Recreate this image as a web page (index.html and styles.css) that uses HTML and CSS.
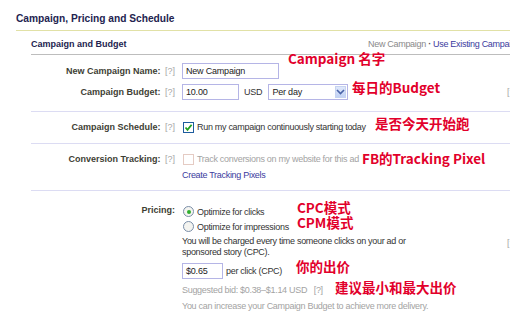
FILE: index.html
```html
<!DOCTYPE html>
<html>
<head>
<meta charset="utf-8">
<link rel="stylesheet" href="styles.css">
</head>
<body>
<div class="page">
  <h1 class="title">Campaign, Pricing and Schedule</h1>
  <div class="section">
    <div class="section-head">
      <span class="section-title">Campaign and Budget</span>
      <span class="links"><span class="muted">New Campaign</span> <span class="dot">·</span> <span class="link">Use Existing Campaign</span></span>
    </div>

    <div class="group g-budget">
      <div class="row">
        <div class="label">New Campaign Name: <span class="help">[?]</span></div>
        <div class="field"><span class="input w-name">New Campaign</span></div>
      </div>
      <div class="row">
        <div class="label">Campaign Budget: <span class="help">[?]</span></div>
        <div class="field">
          <span class="input w-budget">10.00</span>
          <span class="unit">USD</span>
          <span class="select">Per day<span class="select-btn"><svg width="9" height="6" viewBox="0 0 9 6"><path d="M1 1 L4.5 4.5 L8 1" fill="none" stroke="#4a64a8" stroke-width="1.6"/></svg></span></span>
        </div>
        <div class="side-help">[?]</div>
      </div>
    </div>

    <div class="group g-schedule">
      <div class="row">
        <div class="label">Campaign Schedule: <span class="help">[?]</span></div>
        <div class="field">
          <span class="checkbox checked"><svg width="9" height="9" viewBox="0 0 9 9"><path d="M1.5 4.5 L3.5 6.8 L7.6 1.8" fill="none" stroke="#21a121" stroke-width="1.8"/></svg></span>
          <span class="text">Run my campaign continuously starting today</span>
        </div>
      </div>
    </div>

    <div class="group g-tracking">
      <div class="row">
        <div class="label">Conversion Tracking: <span class="help">[?]</span></div>
        <div class="field">
          <span class="checkbox disabled"></span>
          <span class="text gray">Track conversions on my website for this ad</span>
        </div>
      </div>
      <div class="row">
        <div class="label"></div>
        <div class="field"><span class="link">Create Tracking Pixels</span></div>
      </div>
    </div>

    <div class="group g-pricing">
      <div class="row top">
        <div class="label plain">Pricing:</div>
        <div class="stack">
          <div class="option"><span class="radio on"></span><span class="text">Optimize for clicks</span></div>
          <div class="option"><span class="radio"></span><span class="text">Optimize for impressions</span></div>
          <p class="desc">You will be charged every time someone clicks on your ad or<br>sponsored story (CPC).</p>
          <div class="bid"><span class="input w-bid">$0.65</span><span class="text">per click (CPC)</span></div>
          <p class="note-line">Suggested bid: $0.38–$1.14 USD&nbsp;&nbsp;&nbsp;[?]</p>
          <p class="note-line last">You can increase your Campaign Budget to achieve more delivery.</p>
        </div>
        <div class="side-help pricing-help">[?]</div>
      </div>
    </div>
  </div>

  <div class="notes">
    <span class="note n1">Campaign 名字</span>
    <span class="note n2">每日的Budget</span>
    <span class="note n3">是否今天开始跑</span>
    <span class="note n4">FB的Tracking Pixel</span>
    <span class="note n5">CPC模式</span>
    <span class="note n6">CPM模式</span>
    <span class="note n7">你的出价</span>
    <span class="note n8">建议最小和最大出价</span>
  </div>
</div>
</body>
</html>
```

FILE: styles.css
```css
html, body {
  margin: 0;
  padding: 0;
  background: #ffffff;
}
body {
  width: 510px;
  height: 315px;
  overflow: hidden;
  font-family: "Liberation Sans", Arial, sans-serif;
  font-size: 9px;
  color: #333333;
}
.page {
  position: relative;
  padding-left: 16px;
  width: 700px;
}
.title {
  margin: 0;
  padding: 12px 0 4px;
  font-size: 10.2px;
  line-height: 14px;
  font-weight: bold;
  color: #23234f;
  border-bottom: 1px solid #e1e1a6;
}
.section {
  margin-left: 15px;
}
.section-head {
  display: grid;
  grid-template-columns: 337px auto;
  padding: 6px 0 3px;
  line-height: 14px;
  border-bottom: 1px solid #bdbdbd;
  white-space: nowrap;
}
.section-title {
  font-weight: bold;
  color: #23234f;
}
.links {
  letter-spacing: -0.3px;
}
.muted {
  color: #8a8a8a;
}
.dot {
  color: #555;
  font-weight: bold;
}
.link {
  color: #3b3b9e;
  letter-spacing: -0.3px;
}
.group {
  border-bottom: 1px solid #dcdcf3;
}
.g-budget {
  padding: 8px 0 11px;
  display: flex;
  flex-direction: column;
  gap: 5px;
}
.g-schedule {
  padding: 8px 0 9px;
}
.g-tracking {
  padding: 8px 0 8px;
  display: flex;
  flex-direction: column;
  gap: 2px;
}
.g-pricing {
  padding: 13px 0 0;
  border-bottom: none;
}
.row {
  display: grid;
  grid-template-columns: 144px 318px auto;
  column-gap: 7px;
  align-items: center;
  line-height: 14px;
  white-space: nowrap;
}
.row.top {
  align-items: start;
}
.label {
  text-align: right;
  font-weight: bold;
  color: #3e3e34;
}
.label.plain {
  line-height: 12px;
}
.help {
  font-weight: normal;
  color: #a8a8a8;
  margin-left: 2px;
}
.field {
  display: flex;
  align-items: center;
}
.text {
  letter-spacing: -0.3px;
  color: #333;
}
.text.gray {
  color: #a3a3a3;
}
.input {
  box-sizing: border-box;
  height: 16px;
  border: 1px solid #b5b5e6;
  padding: 0 3px;
  line-height: 14px;
  letter-spacing: -0.2px;
  color: #222;
  background: #fff;
}
.w-name { width: 97px; }
.w-budget { width: 57px; }
.w-bid { width: 41px; }
.unit {
  margin: 0 6px 0 5px;
  letter-spacing: -0.2px;
}
.select {
  box-sizing: border-box;
  position: relative;
  width: 80px;
  height: 16px;
  border: 1px solid #b5b5e6;
  padding: 0 3px;
  line-height: 14px;
  letter-spacing: -0.2px;
  color: #222;
}
.select-btn {
  position: absolute;
  right: 1px;
  top: 1px;
  width: 11px;
  height: 12px;
  background: linear-gradient(#dfe8fb, #c2d2f4);
  border: 1px solid #c6d3f0;
  box-sizing: border-box;
  display: flex;
  align-items: center;
  justify-content: center;
}
.side-help {
  color: #a8a8a8;
}
.pricing-help {
  margin-top: 32px;
}
.checkbox {
  box-sizing: border-box;
  width: 11px;
  height: 11px;
  margin: 0 3px 0 1px;
  border: 1px solid #1d5c9e;
  background: #fff;
  display: flex;
  align-items: center;
  justify-content: center;
}
.checkbox.disabled {
  border-color: #e5cbc3;
}
.stack {
  display: flex;
  flex-direction: column;
}
.option {
  display: flex;
  align-items: center;
  height: 15px;
}
.radio {
  box-sizing: border-box;
  width: 11px;
  height: 11px;
  margin: 0 3px 0 1px;
  border: 1px solid #7a8ea8;
  border-radius: 50%;
  background: #f4f4f0;
  display: flex;
  align-items: center;
  justify-content: center;
}
.radio.on::after {
  content: "";
  width: 4px;
  height: 4px;
  border-radius: 50%;
  background: #2fae2f;
}
.desc {
  margin: 2px 0 0;
  line-height: 11px;
  letter-spacing: -0.3px;
}
.bid {
  display: flex;
  align-items: center;
  margin-top: 5px;
  gap: 3px;
}
.note-line {
  margin: 6px 0 0;
  line-height: 11px;
  color: #a3a3a3;
  letter-spacing: -0.3px;
}
.note-line.last {
  margin-top: 5px;
}
.notes {
  position: absolute;
  left: 0;
  top: 0;
}
.note {
  position: absolute;
  white-space: nowrap;
  font-family: "Noto Sans CJK SC", "Liberation Sans", sans-serif;
  font-weight: bold;
  font-size: 13.5px;
  line-height: 14px;
  color: #e2002b;
}
.n1 { left: 288px; top: 51px; }
.n2 { left: 352px; top: 80px; }
.n3 { left: 375px; top: 116px; }
.n4 { left: 362px; top: 151px; }
.n5 { left: 297px; top: 200px; }
.n6 { left: 297px; top: 215px; }
.n7 { left: 296px; top: 259px; }
.n8 { left: 335px; top: 280px; }
```
